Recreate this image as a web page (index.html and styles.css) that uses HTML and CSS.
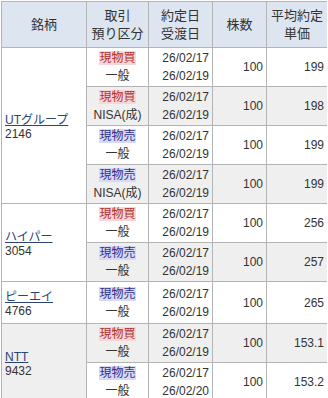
FILE: index.html
```html
<!DOCTYPE html>
<html lang="ja">
<head>
    <meta charset="UTF-8">
    <title>約定一覧</title>
    <link rel="stylesheet" href="styles.css">
</head>
<body>
    <table class="trades">
        <colgroup>
            <col class="c-name">
            <col class="c-kind">
            <col class="c-date">
            <col class="c-qty">
            <col class="c-price">
        </colgroup>
        <thead>
            <tr>
                <th>銘柄</th>
                <th>取引<br>預り区分</th>
                <th>約定日<br>受渡日</th>
                <th>株数</th>
                <th>平均約定<br>単価</th>
            </tr>
        </thead>
        <tbody>
            <tr>
                <td class="name" rowspan="4"><a href="#">UTグループ</a><br>2146</td>
                <td class="kind"><span class="buy">現物買</span><br>一般</td>
                <td class="date">26/02/17<br>26/02/19</td>
                <td class="num">100</td>
                <td class="num">199</td>
            </tr>
            <tr class="alt">
                <td class="kind"><span class="buy">現物買</span><br>NISA(成)</td>
                <td class="date">26/02/17<br>26/02/19</td>
                <td class="num">100</td>
                <td class="num">198</td>
            </tr>
            <tr>
                <td class="kind"><span class="sell">現物売</span><br>一般</td>
                <td class="date">26/02/17<br>26/02/19</td>
                <td class="num">100</td>
                <td class="num">199</td>
            </tr>
            <tr class="alt">
                <td class="kind"><span class="sell">現物売</span><br>NISA(成)</td>
                <td class="date">26/02/17<br>26/02/19</td>
                <td class="num">100</td>
                <td class="num">199</td>
            </tr>
            <tr>
                <td class="name" rowspan="2"><a href="#">ハイパー</a><br>3054</td>
                <td class="kind"><span class="buy">現物買</span><br>一般</td>
                <td class="date">26/02/17<br>26/02/19</td>
                <td class="num">100</td>
                <td class="num">256</td>
            </tr>
            <tr class="alt">
                <td class="kind"><span class="sell">現物売</span><br>一般</td>
                <td class="date">26/02/17<br>26/02/19</td>
                <td class="num">100</td>
                <td class="num">257</td>
            </tr>
            <tr>
                <td class="name"><a href="#">ピーエイ</a><br>4766</td>
                <td class="kind"><span class="sell">現物売</span><br>一般</td>
                <td class="date">26/02/17<br>26/02/19</td>
                <td class="num">100</td>
                <td class="num">265</td>
            </tr>
            <tr class="alt">
                <td class="name" rowspan="2"><a href="#">NTT</a><br>9432</td>
                <td class="kind"><span class="buy">現物買</span><br>一般</td>
                <td class="date">26/02/17<br>26/02/19</td>
                <td class="num">100</td>
                <td class="num">153.1</td>
            </tr>
            <tr>
                <td class="kind"><span class="sell">現物売</span><br>一般</td>
                <td class="date">26/02/17<br>26/02/20</td>
                <td class="num">100</td>
                <td class="num">153.2</td>
            </tr>
        </tbody>
    </table>
</body>
</html>
```

FILE: styles.css
```css
body {
    margin: 1px;
    background: #ffffff;
    font-family: "Liberation Sans", "Noto Sans CJK JP", sans-serif;
    font-size: 12px;
    color: #333333;
}

.trades {
    border-collapse: collapse;
    width: 326px;
    table-layout: fixed;
}

.c-name { width: 85px; }
.c-kind { width: 62px; }
.c-date { width: 64px; }
.c-qty { width: 54px; }
.c-price { width: 61px; }

.trades th,
.trades td {
    border: 1px solid #b4b4b4;
    padding: 1px 3px;
    line-height: 18px;
    height: 36px;
    vertical-align: middle;
    font-weight: normal;
}

.trades th {
    background: #dde6f0;
    text-align: center;
    height: 43px;
    font-size: 13px;
}

.trades tr.alt td {
    background: #efefef;
}

.trades tr td.name {
    background: #ffffff;
    text-align: left;
    line-height: 14px;
    padding-top: 4px;
}

.trades tr.alt td.name {
    background: #efefef;
}

.name a {
    color: #2c4470;
    text-decoration: underline;
}

.kind {
    text-align: center;
    white-space: nowrap;
}

.date {
    text-align: right;
    padding-right: 2px;
}

.num {
    text-align: right;
}

.buy {
    background: #f6d6d6;
    color: #b03030;
}

.sell {
    background: #d8daf4;
    color: #30308c;
}
```
